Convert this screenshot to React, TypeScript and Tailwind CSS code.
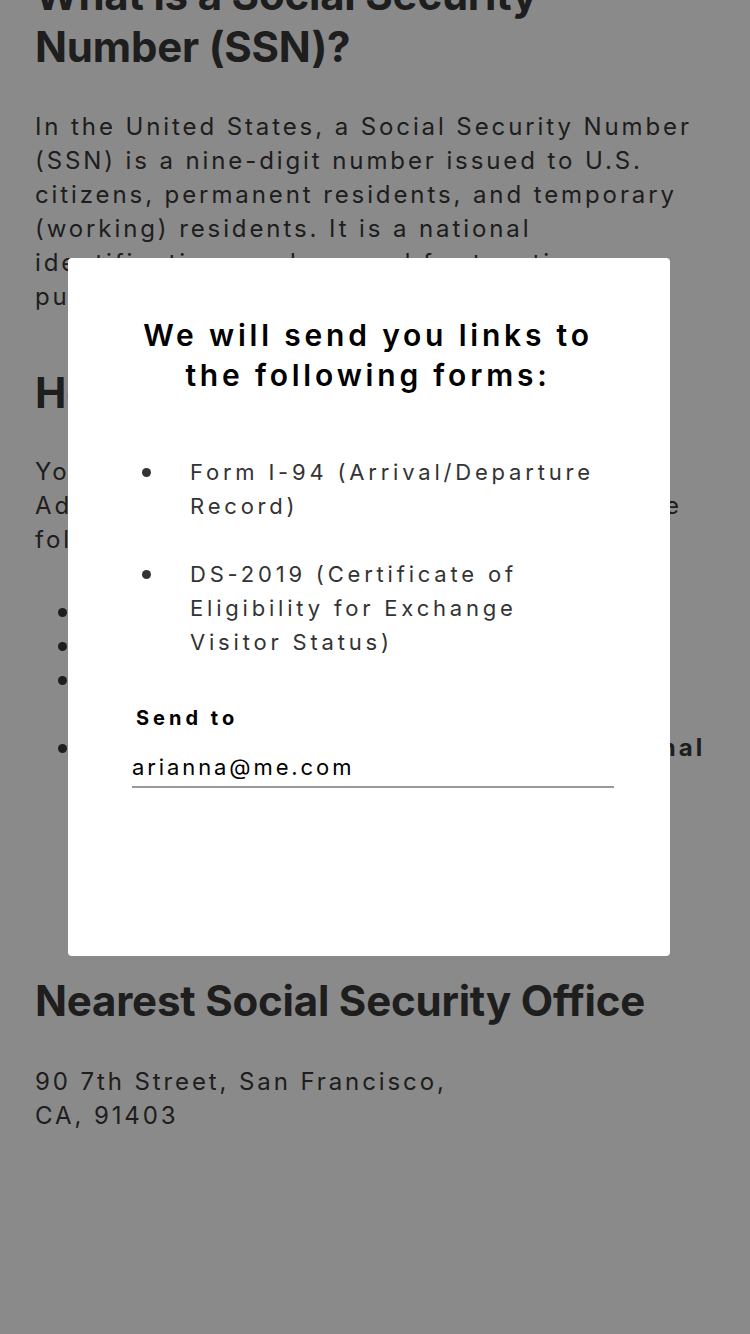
const forms = [
  "Form I-94 (Arrival/Departure Record)",
  "DS-2019 (Certificate of Eligibility for Exchange Visitor Status)",
]

const docs = [
  { text: "Passport", bold: false },
  { text: "Visa", bold: false },
  { text: "Form I-94 (Arrival/Departure Record) and DS-2019", bold: false },
  { text: "Letter from the Office for the International Students", bold: true },
]

export default function App() {
  return (
    <div className="relative min-h-[1334px] w-full overflow-hidden bg-white font-['Inter',sans-serif] text-[#383838]">
      {/* page behind the modal */}
      <div className="px-[35px]">
        <h1 className="-mt-[31px] max-w-[600px] text-[42px] font-bold leading-[52px] tracking-[-0.2px]">
          What is a Social Security Number (SSN)?
        </h1>
        <p className="mt-[37px] text-[24px] leading-[34px] tracking-[2.9px]">
          In the United States, a Social Security Number (SSN) is a nine-digit number issued to U.S. citizens, permanent
          residents, and temporary (working) residents. It is a national identification number used for taxation
          purposes.
        </p>

        <h2 className="mt-[53px] text-[42px] font-bold leading-[52px] tracking-[-0.2px]">How do I get an SSN?</h2>
        <p className="mt-[36px] text-[24px] leading-[34px] tracking-[2.9px]">
          You need to visit your local Social Security Administration (SSA) office, then bring all the following
          documents:
        </p>
        <ul className="mt-[38px] text-[24px] leading-[34px] tracking-[2.9px]">
          {docs.map((d) => (
            <li key={d.text} className="flex gap-[16px] pl-[23px]">
              <span className="mt-[13px] h-[9px] w-[9px] shrink-0 rounded-full bg-[#383838]" />
              <span className={d.bold ? "font-bold tracking-[3.05px]" : ""}>{d.text}</span>
            </li>
          ))}
        </ul>

        <h2 className="mt-[176px] text-[42px] font-bold leading-[52px] tracking-[-0.2px]">
          Nearest Social Security Office
        </h2>
        <p className="mt-[38px] text-[24px] leading-[34px] tracking-[2.9px]">
          90 7th Street, San Francisco,
          <br />
          CA, 91403
        </p>
      </div>

      {/* dim overlay */}
      <div className="absolute inset-0 bg-black/[0.46]" />

      {/* modal */}
      <div className="absolute left-[68px] top-[258px] flex h-[698px] w-[602px] flex-col rounded-[4px] bg-white pl-[64px] pr-[56px] pt-[57px]">
        <h3 className="pr-[10px] text-center text-[30px] font-semibold leading-[40px] tracking-[3.8px] text-black">
          We will send you links to
          <br />
          the following forms:
        </h3>

        <ul className="mt-[60px] flex flex-col gap-[34px] text-[22px] leading-[34px] tracking-[3.8px] text-[#333]">
          {forms.map((f) => (
            <li key={f} className="flex">
              <span className="mt-[13px] ml-[10px] h-[9px] w-[9px] shrink-0 rounded-full bg-[#333]" />
              <span className="ml-[39px]">{f}</span>
            </li>
          ))}
        </ul>

        <label className="mt-[45px] pl-[4px] text-[20px] font-bold leading-[28px] tracking-[4px] text-black">
          Send to
        </label>
        <div className="mt-[20px] border-b-2 border-[#999] pb-[4px] text-[22px] leading-[30px] tracking-[2.9px] text-black">
          arianna@me.com
        </div>
      </div>
    </div>
  )
}
